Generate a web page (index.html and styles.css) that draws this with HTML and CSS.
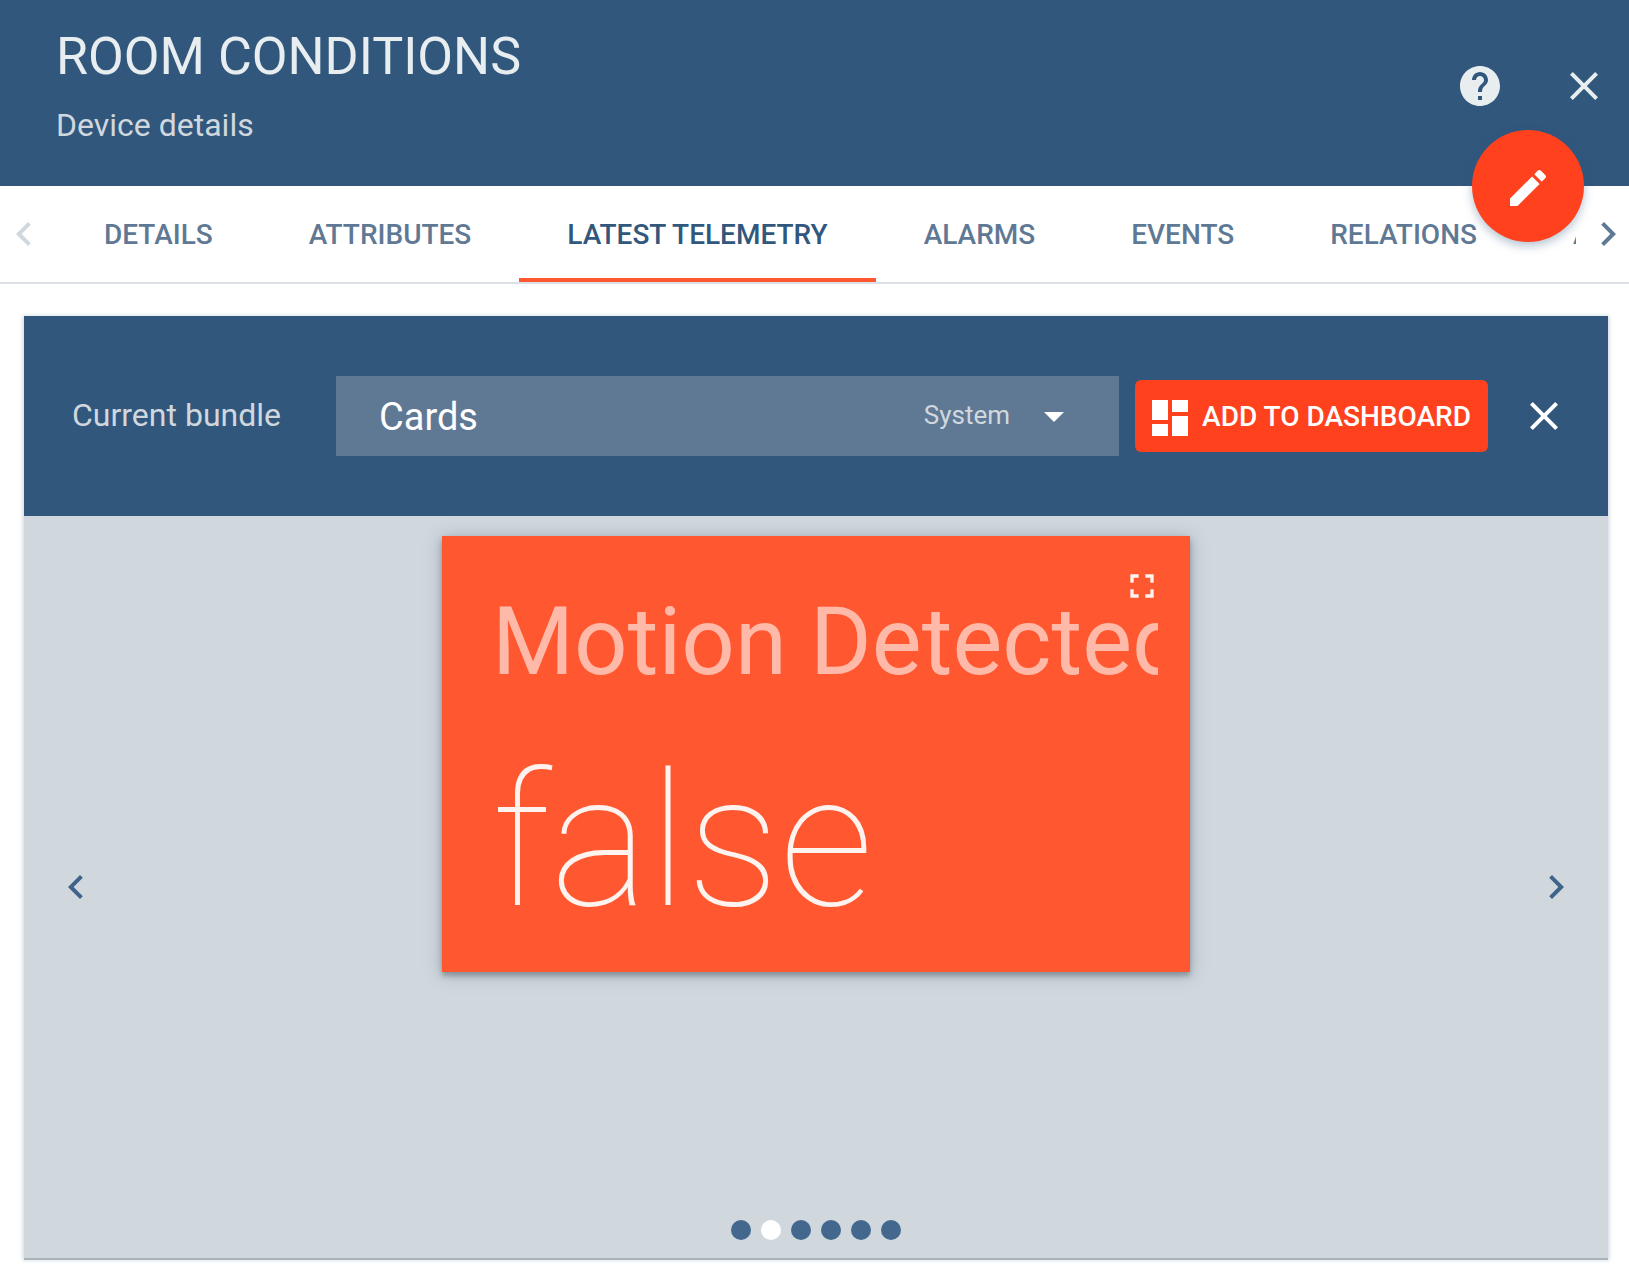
FILE: index.html
```html
<!DOCTYPE html>
<html lang="en">
<head>
<meta charset="utf-8">
<meta name="viewport" content="width=device-width, initial-scale=1">
<title>Room Conditions - Device details</title>
<link rel="stylesheet" href="styles.css">
</head>
<body>
<header class="toolbar">
  <div class="toolbar-text">
    <h1 class="toolbar-title">ROOM CONDITIONS</h1>
    <p class="toolbar-subtitle">Device details</p>
  </div>
  <div class="toolbar-actions">
    <button class="icon-button" type="button" aria-label="Help">
      <svg class="icon" viewBox="0 0 24 24"><path d="M12 2C6.48 2 2 6.48 2 12s4.480 10 10 10 10-4.480 10-10S17.520 2 12 2zm1 17h-2v-2h2v2zm2.070-7.750l-.9.920C13.450 12.900 13 13.500 13 15h-2v-.5c0-1.100.45-2.100 1.170-2.830l1.240-1.260c.37-.36.59-.86.59-1.410 0-1.100-.9-2-2-2s-2 .9-2 2H8c0-2.210 1.790-4 4-4s4 1.790 4 4c0 .88-.36 1.680-.93 2.250z"/></svg>
    </button>
    <button class="icon-button" type="button" aria-label="Close">
      <svg class="icon" viewBox="0 0 24 24"><path d="M19 6.41L17.590 5 12 10.590 6.410 5 5 6.410 10.590 12 5 17.590 6.410 19 12 13.410 17.590 19 19 17.590 13.410 12z"/></svg>
    </button>
  </div>
  <button class="fab" type="button" aria-label="Edit">
    <svg class="icon" viewBox="0 0 24 24"><path d="M3 17.250V21h3.750L17.810 9.940l-3.750-3.750L3 17.250zM20.710 7.040c.39-.39.39-1.020 0-1.410l-2.340-2.340c-.39-.39-1.020-.39-1.410 0l-1.830 1.830 3.750 3.750 1.830-1.830z"/></svg>
  </button>
</header>

<nav class="tabs" aria-label="Device sections">
  <button class="tabs-page" type="button" aria-label="Previous tabs" disabled>
    <svg class="icon" viewBox="0 0 24 24"><path d="M15.410 7.410L14 6l-6 6 6 6 1.410-1.410L10.830 12z"/></svg>
  </button>
  <div class="tabs-list">
    <a class="tab" href="#details">DETAILS</a>
    <a class="tab" href="#attributes">ATTRIBUTES</a>
    <a class="tab tab-active" href="#telemetry" aria-current="page">LATEST TELEMETRY</a>
    <a class="tab" href="#alarms">ALARMS</a>
    <a class="tab" href="#events">EVENTS</a>
    <a class="tab" href="#relations">RELATIONS</a>
    <a class="tab" href="#audit">AUDIT LOGS</a>
  </div>
  <button class="tabs-page tabs-page-next" type="button" aria-label="Next tabs">
    <svg class="icon" viewBox="0 0 24 24"><path d="M10 6L8.590 7.410 13.170 12l-4.580 4.590L10 18l6-6z"/></svg>
  </button>
</nav>

<main class="panel">
  <div class="panel-bar">
    <label class="bundle-label" for="bundle">Current bundle</label>
    <div class="bundle">
      <select class="bundle-select" id="bundle"><option>Cards</option></select>
      <span class="bundle-scope">System</span>
      <svg class="icon bundle-arrow" viewBox="0 0 24 24"><path d="M7 10l5 5 5-5z"/></svg>
    </div>
    <button class="add-button" type="button">
      <svg class="icon" viewBox="0 0 24 24"><path d="M3 13h8V3H3v10zm0 8h8v-6H3v6zm10 0h8V11h-8v10zm0-18v6h8V3h-8z"/></svg>
      <span>ADD TO DASHBOARD</span>
    </button>
    <button class="icon-button panel-close" type="button" aria-label="Close widgets">
      <svg class="icon" viewBox="0 0 24 24"><path d="M19 6.41L17.590 5 12 10.590 6.410 5 5 6.410 10.590 12 5 17.590 6.410 19 12 13.410 17.590 19 19 17.590 13.410 12z"/></svg>
    </button>
  </div>
  <section class="carousel" aria-label="Widgets">
    <button class="icon-button carousel-arrow" type="button" aria-label="Previous widget">
      <svg class="icon" viewBox="0 0 24 24"><path d="M15.410 7.410L14 6l-6 6 6 6 1.410-1.410L10.830 12z"/></svg>
    </button>
    <div class="carousel-stage">
      <article class="card">
        <h2 class="card-title">Motion Detected</h2>
        <p class="card-value">false</p>
        <button class="icon-button card-expand" type="button" aria-label="Fullscreen">
          <svg class="icon icon-small" viewBox="0 0 24 24"><path d="M7 14H5v5h5v-2H7v-3zm-2-4h2V7h3V5H5v5zm12 7h-3v2h5v-5h-2v3zM14 5v2h3v3h2V5h-5z"/></svg>
        </button>
      </article>
      <div class="dots">
        <button class="dot" type="button" aria-label="Widget 1"></button>
        <button class="dot dot-active" type="button" aria-label="Widget 2"></button>
        <button class="dot" type="button" aria-label="Widget 3"></button>
        <button class="dot" type="button" aria-label="Widget 4"></button>
        <button class="dot" type="button" aria-label="Widget 5"></button>
        <button class="dot" type="button" aria-label="Widget 6"></button>
      </div>
    </div>
    <button class="icon-button carousel-arrow" type="button" aria-label="Next widget">
      <svg class="icon" viewBox="0 0 24 24"><path d="M10 6L8.590 7.410 13.170 12l-4.580 4.590L10 18l6-6z"/></svg>
    </button>
  </section>
</main>
</body>
</html>
```
FILE: styles.css
```css
:root {
  --primary: #31577d;
  --primary-soft: #5f7995;
  --accent: #ff411e;
  --card: #ff5830;
  --surface: #d0d8de;
}

* {
  box-sizing: border-box;
}

body {
  display: flex;
  flex-direction: column;
  min-height: 100vh;
  margin: 0;
  background: #fff;
  font-family: Roboto, "Liberation Sans", sans-serif;
}

button {
  padding: 0;
  border: 0;
  background: none;
  color: inherit;
  font: inherit;
  cursor: pointer;
}

h1, h2, p {
  margin: 0;
  font-weight: 400;
}

.icon {
  display: block;
  flex: none;
  width: 48px;
  height: 48px;
  fill: currentColor;
}

.icon-small {
  width: 40px;
  height: 40px;
}

/* Toolbar */
.toolbar {
  position: relative;
  display: flex;
  justify-content: space-between;
  padding: 27px 21px 41px 56px;
  background: var(--primary);
  color: #e8edf0;
}

.toolbar-title {
  font-size: 52px;
  line-height: 60px;
}

.toolbar-subtitle {
  margin-top: 18px;
  color: #d0d8de;
  font-size: 32px;
  line-height: 40px;
}

.toolbar-actions {
  display: flex;
  align-items: center;
  gap: 56px;
}

.fab {
  position: absolute;
  right: 45px;
  bottom: -56px;
  z-index: 1;
  display: grid;
  place-items: center;
  width: 112px;
  height: 112px;
  padding-top: 4px;
  border-radius: 50%;
  background: var(--accent);
  color: #fff;
  box-shadow: 0 4px 10px rgba(49, 87, 125, 0.35);
}

/* Tabs */
.tabs {
  display: flex;
  flex: none;
  height: 98px;
  border-bottom: 2px solid #dbe1e6;
  color: var(--primary-soft);
}

.tabs-page {
  display: flex;
  flex: none;
  align-items: center;
  width: 56px;
}

.tabs-page:disabled {
  color: #d0d8de;
}

.tabs-page-next {
  width: 53px;
  padding-left: 8px;
}

.tabs-list {
  display: flex;
  flex: 1;
  overflow: hidden;
}

.tab {
  flex: none;
  height: 96px;
  padding: 0 48px;
  color: inherit;
  font-size: 28px;
  font-weight: 500;
  line-height: 98px;
  text-decoration: none;
}

.tab-active {
  color: var(--primary);
  box-shadow: inset 0 -4px var(--card);
}

/* Widget panel */
.panel {
  display: flex;
  flex: 1;
  flex-direction: column;
  margin: 32px 21px 20px 24px;
  background: var(--surface);
  box-shadow: 0 2px #a9b2b9, 0 1px 4px 1px rgba(49, 87, 125, 0.25);
}

.panel-bar {
  display: flex;
  align-items: center;
  padding: 60px 40px 60px 48px;
  background: var(--primary);
  color: #fff;
}

.bundle-label {
  flex: none;
  width: 264px;
  padding-bottom: 2px;
  color: #d0d8de;
  font-size: 32px;
  line-height: 40px;
}

.bundle {
  display: grid;
  flex: 1;
  grid-template-columns: 1fr auto 48px;
  align-items: center;
  column-gap: 20px;
  height: 80px;
  padding-right: 41px;
  background: var(--primary-soft);
}

.bundle-select {
  grid-area: 1 / 1 / 2 / 4;
  height: 80px;
  padding: 2px 0 0 43px;
  border: 0;
  background: transparent;
  color: #fff;
  font: 38px/44px Roboto, "Liberation Sans", sans-serif;
  appearance: none;
}

.bundle-scope {
  grid-area: 1 / 2;
  padding-bottom: 2px;
  color: #d0d8de;
  font-size: 26px;
  line-height: 32px;
  pointer-events: none;
}

.bundle-arrow {
  grid-area: 1 / 3;
  pointer-events: none;
}

.add-button {
  display: flex;
  align-items: center;
  gap: 8px;
  height: 72px;
  margin: 0 32px 0 16px;
  padding: 0 17px 0 11px;
  border-radius: 6px;
  background: var(--accent);
  font-size: 28px;
  font-weight: 500;
  white-space: nowrap;
}

.add-button .icon {
  margin-top: 4px;
}

/* Carousel */
.carousel {
  display: flex;
  flex: 1;
  align-items: center;
  padding: 0 28px;
}

.carousel-arrow {
  color: #3f638a;
}

.carousel-stage {
  display: flex;
  flex: 1;
  flex-direction: column;
  align-items: center;
  align-self: stretch;
  justify-content: space-between;
  min-width: 0;
  padding: 20px 0 18px;
}

.card {
  position: relative;
  width: 100%;
  max-width: 748px;
  padding: 51px 32px 21px 50px;
  background: var(--card);
  box-shadow: 0 4px 4px rgba(90, 100, 110, 0.4), 0 2px 14px rgba(90, 100, 110, 0.5);
}

.card-title {
  overflow: hidden;
  color: #ffb9a8;
  font-size: 94px;
  line-height: 110px;
  white-space: nowrap;
}

.card-value {
  margin-top: 34px;
  color: #fff3ef;
  font-size: 186px;
  font-weight: 100;
  line-height: 220px;
}

.card-expand {
  position: absolute;
  top: 30px;
  right: 28px;
  color: #fff3ef;
}

.dots {
  display: flex;
  gap: 10px;
}

.dot {
  width: 20px;
  height: 20px;
  border-radius: 50%;
  background: #44678e;
}

.dot-active {
  background: #fff;
}
```
